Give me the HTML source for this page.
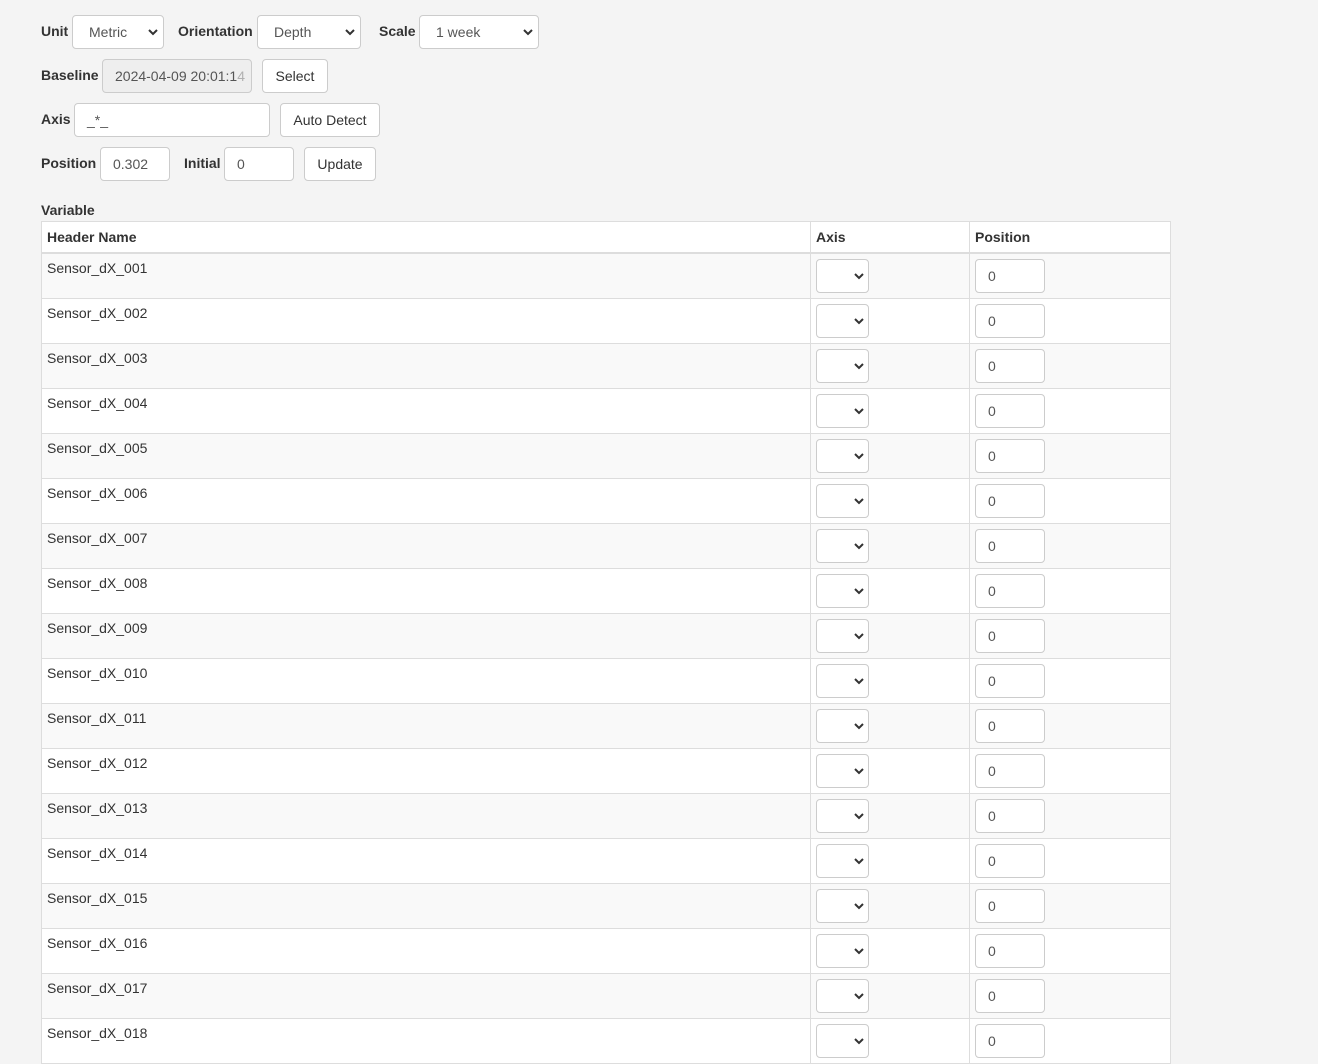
<!DOCTYPE html>
<html><head><meta charset="utf-8"><style>
*{box-sizing:border-box;margin:0;padding:0}
body{width:1318px;height:1061px;overflow:hidden;background:#f4f4f4;font-family:"Liberation Sans",Arial,sans-serif;font-size:14px;color:#333;position:relative}
.l{position:absolute;font-weight:bold;color:#333;line-height:20px}
.box{position:absolute;background:#fff;border:1px solid #ccc;border-radius:4px;height:34px;line-height:32px;padding-left:12px;color:#555;white-space:nowrap;overflow:hidden}
.btn{position:absolute;background:#fff;border:1px solid #ccc;border-radius:4px;height:34px;line-height:32px;text-align:center;color:#333}
.sel svg{position:absolute;right:5px;top:13px}
table{position:absolute;left:41px;top:221px;width:1130px;border-collapse:collapse;background:#fff}
td,th{border:1px solid #ddd;text-align:left;vertical-align:top;padding:0 5px}
th{height:31px;border-bottom:2px solid #ddd;line-height:30px;padding-top:0}
td{height:45px;padding-top:6px;line-height:16px;position:relative}
tr.o td{background:#f9f9f9}
.s{position:absolute;left:5px;top:5px;width:53px;height:34px;border:1px solid #ccc;border-radius:4px;background:#fff}
.s svg{position:absolute;right:4px;top:13px}
.p{position:absolute;left:5px;top:5px;width:70px;height:34px;border:1px solid #ccc;border-radius:4px;background:#fff;line-height:32px;padding-left:12px;color:#555}
</style></head><body>
<div class="l" style="left:41px;top:21px">Unit</div>
<div class="box sel" style="left:72px;top:15px;width:92px;padding-left:16px">Metric<svg width="10" height="7" viewBox="0 0 10 7"><path d="M1 1l4 4 4-4" stroke="#333" stroke-width="2" fill="none"/></svg></div>
<div class="l" style="left:178px;top:21px">Orientation</div>
<div class="box sel" style="left:257px;top:15px;width:104px;padding-left:16px">Depth<svg width="10" height="7" viewBox="0 0 10 7"><path d="M1 1l4 4 4-4" stroke="#333" stroke-width="2" fill="none"/></svg></div>
<div class="l" style="left:379px;top:21px">Scale</div>
<div class="box sel" style="left:419px;top:15px;width:120px;padding-left:16px">1 week<svg width="10" height="7" viewBox="0 0 10 7"><path d="M1 1l4 4 4-4" stroke="#333" stroke-width="2" fill="none"/></svg></div>

<div class="l" style="left:41px;top:65px">Baseline</div>
<div class="box" style="left:102px;top:59px;width:150px;background:#eee">2024-04-09 20:01:1<span style="opacity:.4">4</span></div>
<div class="btn" style="left:262px;top:59px;width:66px">Select</div>

<div class="l" style="left:41px;top:109px">Axis</div>
<div class="box" style="left:74px;top:103px;width:196px">_*_</div>
<div class="btn" style="left:280px;top:103px;width:100px">Auto Detect</div>

<div class="l" style="left:41px;top:153px">Position</div>
<div class="box" style="left:100px;top:147px;width:70px">0.302</div>
<div class="l" style="left:184px;top:153px">Initial</div>
<div class="box" style="left:224px;top:147px;width:70px">0</div>
<div class="btn" style="left:304px;top:147px;width:72px">Update</div>

<div class="l" style="left:41px;top:200px;font-size:14px">Variable</div>

<table>
<tr><th style="width:769px">Header Name</th><th style="width:159px">Axis</th><th>Position</th></tr>
<tr class="o"><td>Sensor_dX_001</td><td><div class="s"><svg width="10" height="7" viewBox="0 0 10 7"><path d="M1 1l4 4 4-4" stroke="#333" stroke-width="2" fill="none"/></svg></div></td><td><div class="p">0</div></td></tr>
<tr><td>Sensor_dX_002</td><td><div class="s"><svg width="10" height="7" viewBox="0 0 10 7"><path d="M1 1l4 4 4-4" stroke="#333" stroke-width="2" fill="none"/></svg></div></td><td><div class="p">0</div></td></tr>
<tr class="o"><td>Sensor_dX_003</td><td><div class="s"><svg width="10" height="7" viewBox="0 0 10 7"><path d="M1 1l4 4 4-4" stroke="#333" stroke-width="2" fill="none"/></svg></div></td><td><div class="p">0</div></td></tr>
<tr><td>Sensor_dX_004</td><td><div class="s"><svg width="10" height="7" viewBox="0 0 10 7"><path d="M1 1l4 4 4-4" stroke="#333" stroke-width="2" fill="none"/></svg></div></td><td><div class="p">0</div></td></tr>
<tr class="o"><td>Sensor_dX_005</td><td><div class="s"><svg width="10" height="7" viewBox="0 0 10 7"><path d="M1 1l4 4 4-4" stroke="#333" stroke-width="2" fill="none"/></svg></div></td><td><div class="p">0</div></td></tr>
<tr><td>Sensor_dX_006</td><td><div class="s"><svg width="10" height="7" viewBox="0 0 10 7"><path d="M1 1l4 4 4-4" stroke="#333" stroke-width="2" fill="none"/></svg></div></td><td><div class="p">0</div></td></tr>
<tr class="o"><td>Sensor_dX_007</td><td><div class="s"><svg width="10" height="7" viewBox="0 0 10 7"><path d="M1 1l4 4 4-4" stroke="#333" stroke-width="2" fill="none"/></svg></div></td><td><div class="p">0</div></td></tr>
<tr><td>Sensor_dX_008</td><td><div class="s"><svg width="10" height="7" viewBox="0 0 10 7"><path d="M1 1l4 4 4-4" stroke="#333" stroke-width="2" fill="none"/></svg></div></td><td><div class="p">0</div></td></tr>
<tr class="o"><td>Sensor_dX_009</td><td><div class="s"><svg width="10" height="7" viewBox="0 0 10 7"><path d="M1 1l4 4 4-4" stroke="#333" stroke-width="2" fill="none"/></svg></div></td><td><div class="p">0</div></td></tr>
<tr><td>Sensor_dX_010</td><td><div class="s"><svg width="10" height="7" viewBox="0 0 10 7"><path d="M1 1l4 4 4-4" stroke="#333" stroke-width="2" fill="none"/></svg></div></td><td><div class="p">0</div></td></tr>
<tr class="o"><td>Sensor_dX_011</td><td><div class="s"><svg width="10" height="7" viewBox="0 0 10 7"><path d="M1 1l4 4 4-4" stroke="#333" stroke-width="2" fill="none"/></svg></div></td><td><div class="p">0</div></td></tr>
<tr><td>Sensor_dX_012</td><td><div class="s"><svg width="10" height="7" viewBox="0 0 10 7"><path d="M1 1l4 4 4-4" stroke="#333" stroke-width="2" fill="none"/></svg></div></td><td><div class="p">0</div></td></tr>
<tr class="o"><td>Sensor_dX_013</td><td><div class="s"><svg width="10" height="7" viewBox="0 0 10 7"><path d="M1 1l4 4 4-4" stroke="#333" stroke-width="2" fill="none"/></svg></div></td><td><div class="p">0</div></td></tr>
<tr><td>Sensor_dX_014</td><td><div class="s"><svg width="10" height="7" viewBox="0 0 10 7"><path d="M1 1l4 4 4-4" stroke="#333" stroke-width="2" fill="none"/></svg></div></td><td><div class="p">0</div></td></tr>
<tr class="o"><td>Sensor_dX_015</td><td><div class="s"><svg width="10" height="7" viewBox="0 0 10 7"><path d="M1 1l4 4 4-4" stroke="#333" stroke-width="2" fill="none"/></svg></div></td><td><div class="p">0</div></td></tr>
<tr><td>Sensor_dX_016</td><td><div class="s"><svg width="10" height="7" viewBox="0 0 10 7"><path d="M1 1l4 4 4-4" stroke="#333" stroke-width="2" fill="none"/></svg></div></td><td><div class="p">0</div></td></tr>
<tr class="o"><td>Sensor_dX_017</td><td><div class="s"><svg width="10" height="7" viewBox="0 0 10 7"><path d="M1 1l4 4 4-4" stroke="#333" stroke-width="2" fill="none"/></svg></div></td><td><div class="p">0</div></td></tr>
<tr><td>Sensor_dX_018</td><td><div class="s"><svg width="10" height="7" viewBox="0 0 10 7"><path d="M1 1l4 4 4-4" stroke="#333" stroke-width="2" fill="none"/></svg></div></td><td><div class="p">0</div></td></tr>
</table>
</body></html>
